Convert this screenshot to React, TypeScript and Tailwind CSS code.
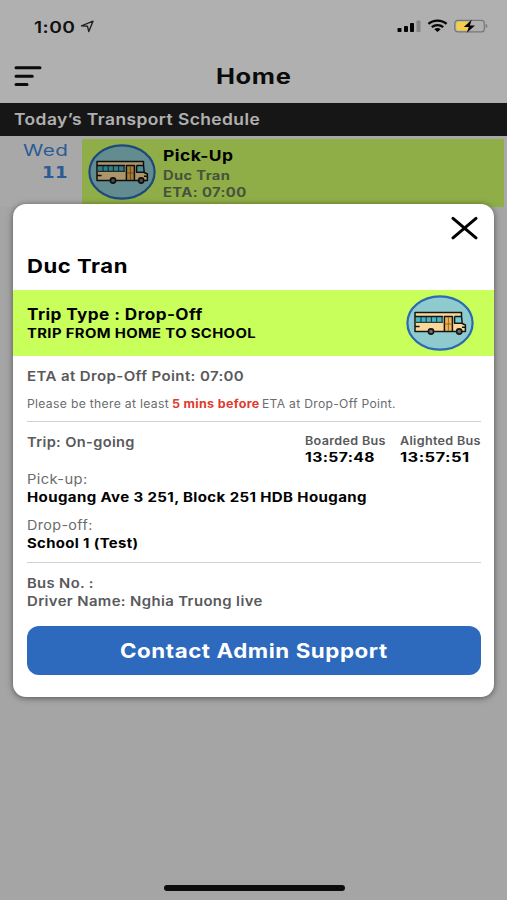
import { useLayoutEffect, useRef, useState } from "react";
import type { ReactNode } from "react";
import clsx from "clsx";

// Stretches one line of text to the width of its box
function Fit({ className, children }: { className: string; children: ReactNode }) {
  const box = useRef<HTMLDivElement>(null);
  const text = useRef<HTMLSpanElement>(null);
  const [scale, setScale] = useState(1);

  useLayoutEffect(() => {
    if (!box.current || !text.current) return;
    setScale(box.current.clientWidth / text.current.offsetWidth);
  }, []);

  return (
    <div ref={box} className={clsx("whitespace-nowrap", className)}>
      <span
        ref={text}
        className="inline-block origin-left align-top tracking-wide"
        style={{ transform: `scaleX(${scale})` }}
      >
        {children}
      </span>
    </div>
  );
}

function BusIcon() {
  return (
    <svg width="68" height="56" viewBox="0 0 68 56" fill="none" className="shrink-0">
      <ellipse cx="34" cy="28" rx="32.6" ry="26.7" fill="#8ecbcf" stroke="#2d69b4" strokeWidth="2.2" />
      <path d="M9 17.5h46.500v4l.8 6.500 3 2v6.500H9z" fill="#fbd79a" />
      <path d="M10 21.500h27v5.800H10z" fill="#45b9c9" />
      <path d="M48.800 21.500h6.400l.8 6.300h-7.200z" fill="#6bd0dc" />
      <path d="M38.500 21.500h8v15h-8z" fill="#f0b653" />
      <g stroke="#151515" strokeWidth="1.5" strokeLinejoin="round">
        <path d="M9 17.500h46.500v3.500l.7 7.500 3.200 1.500v6.500H9z" />
        <path d="M9 21.400h28M48.500 21.400h7" />
        <path d="M38.400 36.500V21.600h8v14.900M48.600 21.400v6.800h7.400" />
        <path d="M9 31.500h4.600M56 32.300h3.300" />
      </g>
      <path d="M10 27.400h27M15 22v5M20.200 22v5M25.400 22v5M30.600 22v5M36 22v5" stroke="#2b3c3d" strokeWidth="1.2" />
      <path d="M42.400 22v14M38.800 29h7.500" stroke="#8a6526" strokeWidth="0.9" />
      <circle cx="25" cy="36.500" r="2.600" fill="#6d6d6d" stroke="#151515" strokeWidth="1.6" />
      <circle cx="53.200" cy="36.500" r="2.600" fill="#6d6d6d" stroke="#151515" strokeWidth="1.6" />
    </svg>
  );
}

function StatusBar() {
  return (
    <div className="relative z-10 flex h-[52px] items-start">
      <Fit className="ml-[34px] mt-[17px] w-[42px] text-[16px] font-semibold leading-[20px] text-[#111]">1:00</Fit>
      <svg className="ml-[4px] mt-[20px]" width="15" height="13" viewBox="0 0 15 13" fill="none">
        <path d="M1.5 5.8 13 1.2 8.8 11.5 7.5 6.3z" stroke="#222" strokeWidth="1.4" strokeLinejoin="round" />
      </svg>
      <div className="ml-auto mr-[18px] mt-[19px] flex items-center">
        <svg width="24" height="14" viewBox="0 0 24 14">
          <rect x="0.5" y="9" width="4" height="4" rx="0.8" fill="#050505" />
          <rect x="7" y="7" width="4" height="6" rx="0.8" fill="#050505" />
          <rect x="13" y="4" width="4" height="9" rx="0.8" fill="#050505" />
          <rect x="19.5" y="1.5" width="4" height="11.5" rx="0.8" fill="#858585" />
        </svg>
        <svg className="ml-[6px]" width="21" height="14" viewBox="0 0 21 14" fill="none" stroke="#050505">
          <path d="M1.4 4.9C6.4.5 14.6.5 19.6 4.9" strokeWidth="2.3" />
          <path d="M4.8 8.2c3.2-2.8 8.2-2.8 11.4 0" strokeWidth="2.2" />
          <path d="m7.3 10.2 3.2 2.9 3.2-2.9q-3.2-2.2-6.4 0z" fill="#050505" stroke="none" />
        </svg>
        <svg className="ml-[6px]" width="35" height="14" viewBox="0 0 35 14">
          <rect x="0.8" y="1.3" width="29.5" height="11.6" rx="3" fill="none" stroke="#777" strokeWidth="1.2" />
          <path d="M4.3 2.8h10.2v8.6H4.3a2 2 0 0 1-2-2V4.8a2 2 0 0 1 2-2z" fill="#f3cf4c" />
          <path d="M31.7 5v4.2c2.2-.6 2.2-3.6 0-4.2z" fill="#777" />
          <path d="M17.700.8 9.800 8h5l-2 5.800L21 6.500h-5.100z" fill="#050505" />
        </svg>
      </div>
    </div>
  );
}

function Home() {
  return (
    <>
      <header className="flex h-[51px] items-start">
        <svg className="ml-[14px] mt-[13px]" width="28" height="22" viewBox="0 0 28 22" stroke="#111" strokeWidth="3" strokeLinecap="round">
          <path d="M2 2.8h24M2 11.2h16.300M2 19.500h11" />
        </svg>
        <Fit className="ml-[174px] mt-[11px] w-[75px] text-[21px] font-bold leading-[28px] text-[#111]">Home</Fit>
      </header>
      <div className="h-[33px] bg-[#212121] pl-[14px] pt-[6px]">
        <Fit className="w-[246px] text-[15.5px] font-semibold leading-[22px] text-white">Today’s Transport Schedule</Fit>
      </div>
      <div className="flex h-[71px] bg-[#f3f3f3] pr-[3px] pt-[3px]">
        <div className="flex w-[82px] flex-col items-end pr-[14px] text-[#3f86d8]">
          <Fit className="w-[45px] text-[16px] leading-[22px]">Wed</Fit>
          <Fit className="mt-[1px] w-[26px] font-['DejaVu_Sans','Liberation_Sans',sans-serif] text-[16px] font-bold leading-[22px]">11</Fit>
        </div>
        <div className="flex flex-1 bg-[#cffd68] pl-[6px] pt-[5px]">
          <BusIcon />
          <div className="pl-[7px] pt-[1px]">
            <Fit className="w-[71px] text-[15px] font-bold leading-[22px] text-black">Pick-Up</Fit>
            <Fit className="w-[67px] text-[12.5px] font-bold leading-[17px] text-[#68775a]">Duc Tran</Fit>
            <Fit className="w-[83px] text-[12.5px] font-bold leading-[17px] text-[#68775a]">ETA: 07:00</Fit>
          </div>
        </div>
      </div>
    </>
  );
}

function BusTime({ label, time }: { label: string; time: string }) {
  return (
    <div className="w-[81px]">
      <Fit className="w-[81px] text-[11.5px] font-semibold leading-[16px] text-[#58595b]">{label}</Fit>
      <Fit className="w-[70px] text-[13px] font-bold leading-[16px] text-black">{time}</Fit>
    </div>
  );
}

function TripModal() {
  return (
    <div className="absolute left-[13px] top-[204px] h-[493px] w-[481px] overflow-hidden rounded-[13px] bg-white shadow-[0_1px_6px_rgba(0,0,0,0.5)]">
      <div className="flex h-[49px] justify-end pr-[16px] pt-[12px]">
        <svg width="28" height="24" viewBox="0 0 28 24" stroke="#000" strokeWidth="3" strokeLinecap="round">
          <path d="m3 2.400 23 19.400M26 2.400l-23 19.400" />
        </svg>
      </div>
      <Fit className="ml-[14px] w-[101px] text-[19px] font-bold leading-[28px] text-black">Duc Tran</Fit>
      <div className="mt-[9px] flex h-[66px] items-center justify-between bg-[#c9ff5b] pl-[14px] pr-[20px]">
        <div className="pt-[1px]">
          <Fit className="w-[176px] text-[15.5px] font-bold leading-[20px] text-black">Trip Type : Drop-Off</Fit>
          <Fit className="w-[229px] text-[13px] font-bold leading-[17px] text-black">TRIP FROM HOME TO SCHOOL</Fit>
        </div>
        <BusIcon />
      </div>
      <div className="pl-[14px] pr-[13px] text-[13.5px] text-[#58595b]">
        <Fit className="mt-[10px] w-[217px] font-semibold leading-[20px]">ETA at Drop-Off Point: 07:00</Fit>
        <div className="mt-[9px] flex text-[11.5px] leading-[18px] text-[#6b6c6e]">
          <Fit className="w-[142px]">Please be there at least</Fit>
          <Fit className="ml-[3px] w-[87px] font-bold text-[#e03a2c]">5 mins before</Fit>
          <Fit className="ml-[3px] w-[134px]">ETA at Drop-Off Point.</Fit>
        </div>
        <div className="mt-[8px] h-px bg-[#d2d2d2]" />
        <div className="flex h-[49px] items-start justify-between pt-[10px]">
          <Fit className="w-[108px] font-semibold leading-[20px]">Trip: On-going</Fit>
          <div className="flex gap-[14px] pt-[1px]">
            <BusTime label="Boarded Bus" time="13:57:48" />
            <BusTime label="Alighted Bus" time="13:57:51" />
          </div>
        </div>
        <Fit className="w-[60px] leading-[17px] text-[#6b6c6e]">Pick-up:</Fit>
        <Fit className="mt-[1px] w-[340px] text-[13px] font-bold leading-[17px] text-black">Hougang Ave 3 251, Block 251 HDB Hougang</Fit>
        <Fit className="mt-[11px] w-[66px] leading-[17px] text-[#6b6c6e]">Drop-off:</Fit>
        <Fit className="mt-[1px] w-[112px] text-[13px] font-bold leading-[17px] text-black">School 1 (Test)</Fit>
        <div className="mt-[10px] h-px bg-[#d2d2d2]" />
        <Fit className="mt-[12px] w-[67px] text-[13px] font-semibold leading-[17px]">Bus No. :</Fit>
        <Fit className="mt-[1px] w-[236px] text-[13px] font-semibold leading-[17px]">Driver Name: Nghia Truong live</Fit>
        <button className="mt-[16px] flex h-[49px] w-full items-center justify-center rounded-[12px] bg-[#2d69bc] text-white">
          <Fit className="w-[268px] text-left text-[20px] font-bold leading-[28px]">Contact Admin Support</Fit>
        </button>
      </div>
    </div>
  );
}

export default function App() {
  return (
    <div className="relative h-[900px] w-[507px] overflow-hidden bg-[#efefef] font-['Inter','Liberation_Sans',sans-serif]">
      <div className="bg-white">
        <StatusBar />
        <Home />
      </div>
      <div className="absolute inset-0 bg-black/31" />
      <TripModal />
      <div className="absolute bottom-[9px] left-[164px] h-[6px] w-[181px] rounded-full bg-[#0c0c0c]" />
    </div>
  );
}
